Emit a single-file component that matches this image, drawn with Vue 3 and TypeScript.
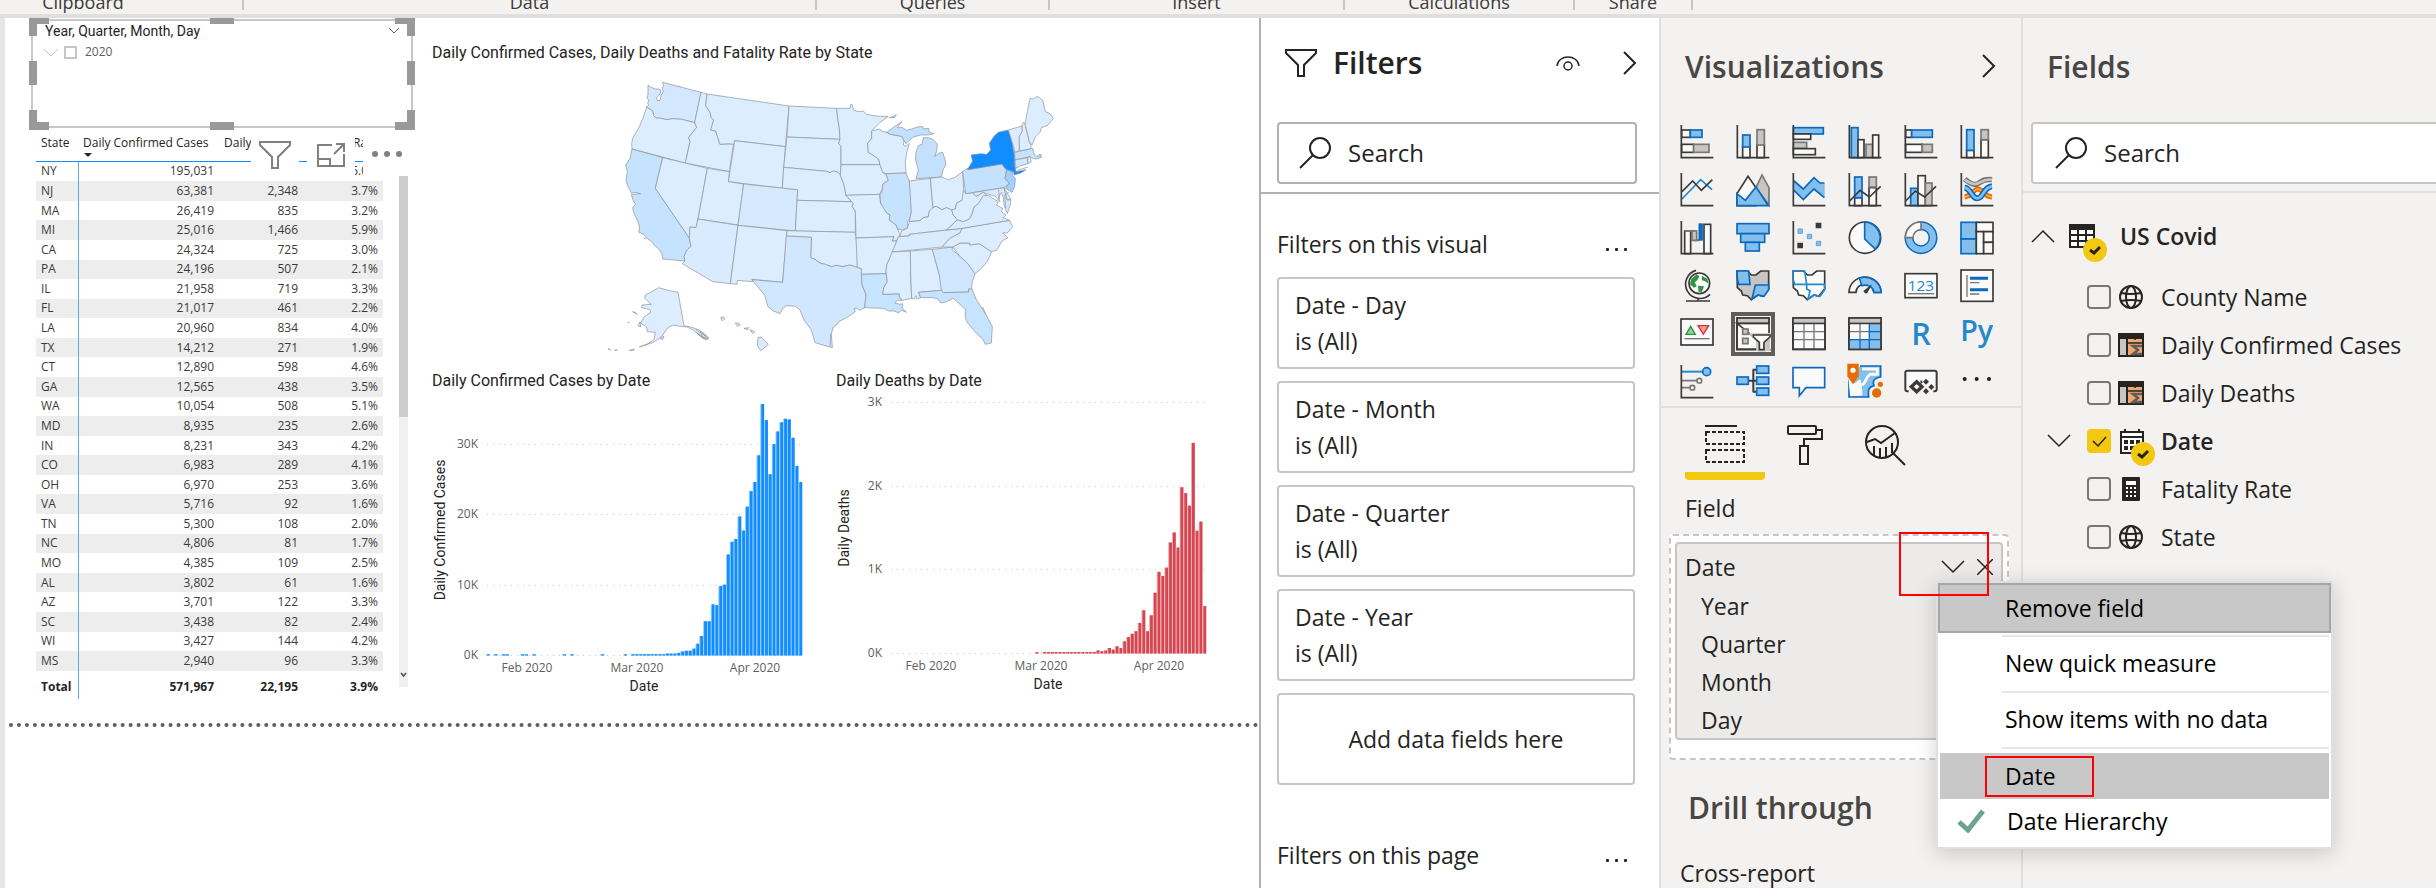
<script setup lang="ts">
import { ref } from 'vue'

type Row = [string, string, string, string]

const ribbonGroups = ['Clipboard', 'Data', 'Queries', 'Insert', 'Calculations', 'Share']

const rows: Row[] = [
  ['NY', '195,031', '9,805', '5.0%'],
  ['NJ', '63,381', '2,348', '3.7%'],
  ['MA', '26,419', '835', '3.2%'],
  ['MI', '25,016', '1,466', '5.9%'],
  ['CA', '24,324', '725', '3.0%'],
  ['PA', '24,196', '507', '2.1%'],
  ['IL', '21,958', '719', '3.3%'],
  ['FL', '21,017', '461', '2.2%'],
  ['LA', '20,960', '834', '4.0%'],
  ['TX', '14,212', '271', '1.9%'],
  ['CT', '12,890', '598', '4.6%'],
  ['GA', '12,565', '438', '3.5%'],
  ['WA', '10,054', '508', '5.1%'],
  ['MD', '8,935', '235', '2.6%'],
  ['IN', '8,231', '343', '4.2%'],
  ['CO', '6,983', '289', '4.1%'],
  ['OH', '6,970', '253', '3.6%'],
  ['VA', '5,716', '92', '1.6%'],
  ['TN', '5,300', '108', '2.0%'],
  ['NC', '4,806', '81', '1.7%'],
  ['MO', '4,385', '109', '2.5%'],
  ['AL', '3,802', '61', '1.6%'],
  ['AZ', '3,701', '122', '3.3%'],
  ['SC', '3,438', '82', '2.4%'],
  ['WI', '3,427', '144', '4.2%'],
  ['MS', '2,940', '96', '3.3%'],
]

/* State outlines: [name, fill, path] */
const P = '#dcedff'
const states: [string, string, string][] = [
  ['WA', '#d3e8ff', 'M144 30L152 36 165 42 176 42 183 46 180 58 170 68 172 77 180 76 184 60 190 50 186 38 191 34 188 22 303 52 284 143 245 133 220 131 200 134 184 130 168 129 161 122 158 108 140 96 146 90 143 84 147 75 141 70 144 58Z'],
  ['OR', P, 'M140 96L158 108 161 122 168 129 184 130 200 134 220 131 245 133 284 143 290 157 278 172 266 188 270 200 256 264 96 222 95 206 98 190 118 155 130 126Z'],
  ['CA', '#c5e2ff', 'M96 222L188 248 166 340 268 489 273 514 260 526 252 545 255 558 188 552 186 536 176 522 162 510 158 502 138 488 132 478 117 472 118 455 114 440 100 410 98 398 106 388 98 372 94 358 122 356 104 352 94 354 84 334 78 318 82 290 77 270 90 250Z'],
  ['NV', P, 'M188 248L322 280 294 432 288 458 270 456 268 489 166 340Z'],
  ['ID', P, 'M303 52L321 57 317 92 330 112 334 128 341 135 332 165 347 168 352 184 360 208 401 206 388 290 256 264 270 200 266 188 278 172 290 157 284 143Z'],
  ['MT', P, 'M321 57L567 93 556 215 404 197 401 208 384 206 360 208 352 184 347 168 332 165 341 135 334 128 330 112 317 92Z'],
  ['WY', P, 'M404 197L556 215 547 340 385 320Z'],
  ['UT', P, 'M322 280L388 290 385 320 431 327 414 450 294 432Z'],
  ['CO', '#d6eaff', 'M431 327L593 344 586 468 414 451Z'],
  ['AZ', '#d9ecff', 'M294 432L414 451 391 626 338 620 247 566 255 558 252 545 260 526 273 514 268 489 270 456 288 458Z'],
  ['NM', P, 'M414 451L561 467 548 622 456 613 458 620 412 616 411 628 391 626Z'],
  ['ND', P, 'M567 93L710 100 713 130 718 160 720 193 561 186Z'],
  ['SD', P, 'M561 186L720 193 716 205 723 214 723 268 721 300 714 292 700 288 690 293 680 289 551 277Z'],
  ['NE', P, 'M551 277L680 289 690 293 700 288 714 292 721 300 732 330 738 361 754 380 591 376 593 344 547 339Z'],
  ['KS', P, 'M591 376L754 380 760 386 756 394 766 408 766 472 586 468Z'],
  ['OK', P, 'M561 467L766 472 772 520 772 578 750 570 726 575 710 571 694 575 676 568 660 564 646 554 632 548 634 487 559 483Z'],
  ['TX', '#d0e7ff', 'M559 483L634 487 632 548 646 554 660 564 676 568 694 575 710 571 726 575 750 570 784 580 786 628 798 660 794 698 778 706 770 700 762 700 766 710 740 728 716 740 712 748 700 756 694 776 697 818 668 810 645 803 634 765 612 735 600 705 586 694 560 692 548 700 540 716 520 708 503 694 495 662 456 614 548 622Z'],
  ['MN', P, 'M710 100L750 100 752 88 757 90 760 105 776 110 790 108 800 118 822 122 838 124 865 124 840 142 815 168 815 190 803 205 805 232 826 244 836 252 840 269 723 269 723 214 716 205 720 193 718 160 713 130Z'],
  ['IA', P, 'M723 269L840 269 848 292 860 302 865 316 848 328 846 344 838 358 738 361 732 330 721 300Z'],
  ['MO', P, 'M738 361L838 358 842 385 856 402 860 414 870 420 868 435 888 450 893 462 900 480 888 498 876 498 882 485 768 489 766 408 756 394 760 386Z'],
  ['AR', P, 'M768 489L882 485 876 498 890 498 880 530 870 548 860 570 858 596 784 598 784 580 772 578Z'],
  ['LA', '#c6e3ff', 'M784 598L858 596 862 620 852 636 848 658 898 656 898 666 906 676 892 676 884 684 900 688 908 686 906 698 920 712 904 706 896 714 884 708 866 708 850 700 822 699 794 698 798 660 786 628Z'],
  ['WI', P, 'M815 168L840 162 844 168 860 172 872 178 905 184 912 198 910 210 918 214 928 205 920 232 916 262 918 294 858 296 848 292 840 269 836 252 805 232 803 205 815 190Z'],
  ['IL', '#c5e2ff', 'M858 296L918 294 928 318 932 360 934 410 930 430 922 442 922 460 908 465 893 462 888 450 868 435 870 420 860 414 842 385 840 360 848 344 848 328 865 316 860 302Z'],
  ['MI', '#c3e1ff', 'M860 172L882 156 905 140 892 158 908 158 920 166 935 162 952 156 968 154 970 162 986 160 988 172 1002 176 984 180 962 180 940 186 928 196 918 206 912 196 905 184 872 178ZM970 188L985 188 1000 194 1012 208 1010 228 1004 244 1018 234 1028 232 1034 250 1038 270 1030 282 1024 306 948 311 955 285 947 256 947 236 955 212 966 208ZM868 128L880 124 889 119 884 128Z'],
  ['IN', '#d8ebff', 'M928 318L991 310 999 400 988 408 985 425 970 428 960 437 928 440 934 410Z'],
  ['OH', P, 'M991 310L1024 306 1045 314 1064 308 1088 290 1092 360 1086 376 1070 384 1066 402 1055 405 1040 398 1026 404 1008 394 999 398Z'],
  ['KY', P, 'M928 440L960 437 970 428 985 425 988 408 999 398 1008 394 1026 404 1040 398 1055 405 1060 420 1072 434 1040 465 928 478 928 483 900 484 904 468 922 460Z'],
  ['TN', '#d9ecff', 'M895 485L928 483 928 478 1086 460 1080 474 1050 490 1026 516 876 531 888 504Z'],
  ['MS', P, 'M876 531L931 528 932 600 935 670 908 676 898 666 898 656 848 658 852 636 862 620 858 590 860 570 870 548Z'],
  ['AL', P, 'M931 528L997 523 1018 600 1024 620 1025 646 956 652 962 668 950 672 948 662 942 672 935 670 932 600Z'],
  ['GA', '#d0e7ff', 'M997 523L1058 516 1056 524 1078 542 1102 564 1125 596 1116 624 1115 644 1106 642 1106 651 1030 653 1024 646 1018 600Z'],
  ['FL', '#c6e3ff', 'M956 652L1025 646 1030 653 1106 651 1106 642 1116 642 1128 672 1154 712 1168 738 1177 755 1174 804 1156 808 1148 792 1130 776 1104 745 1096 730 1096 704 1084 692 1060 670 1040 680 1022 684 1014 672 1000 668 962 668Z'],
  ['SC', P, 'M1058 516L1080 504 1108 504 1110 510 1138 506 1175 530 1162 560 1140 584 1125 596 1102 564 1078 542Z'],
  ['NC', P, 'M1086 460L1228 436 1238 455 1222 474 1208 474 1224 488 1206 498 1190 526 1175 530 1138 506 1110 510 1108 504 1080 504 1058 516 1026 516 1050 490 1080 474Z'],
  ['VA', '#d9ecff', 'M1040 465L1072 434 1090 440 1108 432 1115 420 1122 396 1136 384 1150 358 1166 362 1195 380 1190 390 1208 400 1204 410 1218 420 1210 428 1228 436 1086 460Z'],
  ['WV', P, 'M1090 345L1097 356 1118 353 1128 364 1150 352 1160 362 1150 362 1136 384 1122 396 1115 420 1108 432 1090 440 1072 434 1060 420 1055 405 1066 402 1070 384 1086 376Z'],
  ['PA', '#c4e2ff', 'M1088 290L1102 280 1104 284 1205 267 1220 285 1215 310 1228 325 1212 338 1097 356Z'],
  ['NY', '#118dff', 'M1102 284L1118 258 1113 240 1142 236 1160 238 1172 225 1168 205 1182 184 1195 172 1225 165 1236 200 1243 240 1244 270 1248 290 1278 284 1262 294 1242 300 1242 291 1220 284 1205 267Z'],
  ['NJ', '#9fd0ff', 'M1220 284L1240 292 1238 302 1246 310 1244 334 1236 352 1216 340 1228 325 1215 310Z'],
  ['VT', P, 'M1225 165L1266 153 1267 168 1258 185 1258 228 1244 232 1243 222Z'],
  ['NH', P, 'M1266 153L1270 142 1275 146 1288 200 1294 216 1290 222 1258 228 1258 185 1267 168Z'],
  ['ME', P, 'M1275 146L1282 110 1290 70 1300 72 1312 64 1328 75 1336 110 1350 116 1360 130 1344 150 1324 158 1320 172 1306 186 1296 210 1288 200Z'],
  ['MA', '#c5e2ff', 'M1244 232L1290 222 1298 220 1302 236 1310 244 1324 240 1318 238 1326 246 1308 252 1298 250 1290 245 1245 255Z'],
  ['CT', '#d3e8ff', 'M1245 255L1283 248 1284 266 1262 272 1248 280Z'],
  ['RI', P, 'M1283 248L1290 245 1294 260 1284 266Z'],
  ['MD', '#d6eaff', 'M1118 353L1212 338 1222 375 1233 374 1230 392 1222 416 1212 390 1210 368 1204 352 1196 366 1200 380 1186 364 1166 358 1150 352 1128 364Z'],
  ['DE', P, 'M1212 340L1220 350 1232 372 1222 375Z'],
  ['AK', P, 'M176 638L205 646 234 652 252 752 272 756 296 764 320 782 326 792 306 788 284 768 262 756 240 754 222 750 206 756 196 768 186 784 160 802 118 816 140 808 162 794 166 772 142 770 140 756 122 744 132 726 152 712 150 704 124 698 126 690 154 688 134 670 136 660 152 652Z'],
  ['AK islands', P, 'M98 710L112 718 106 712ZM180 790L192 784 188 794ZM88 826L104 822 100 826ZM24 821L32 825ZM44 826L52 825ZM120 740L122 756 114 752ZM84 742L88 743Z'],
  ['HI', '#d8ebff', 'M362 728L370 725 374 732 366 737ZM406 744L416 744 420 750 412 754ZM432 760L446 758 442 764ZM450 764L464 770 458 776ZM474 788L484 786 505 808 482 827 472 812Z'],
]
const coastDetail =
  'M288 764L326 788M286 770L322 794M292 776L318 796M300 768L312 792M308 772L322 796M1148 696L1156 716M1226 352L1214 360 1218 400M1196 344L1198 372M1252 286L1284 276M692 776L690 814M130 488L138 492'

interface Chart {
  title: string
  axis: string
  color: string
  light: string
  base: number
  step: number
  ticks: string[]
  values: number[]
}

const fill = (n: number, v: number): number[] => Array(n).fill(v)
/* One value per day, 22 January to 13 April, in units of one axis step */
const cases: number[] = fill(83, 0)
;[0, 2, 4, 5, 9, 10, 12, 20, 22, 30, 36].forEach((i) => (cases[i] = 0.01))
;[
  ...fill(9, 0.012), ...fill(3, 0.02), 0.03, 0.05, 0.06, 0.06, 0.09, 0.16, 0.27, 0.48, 0.48, 0.72, 0.71, 0.98, 1.0,
  1.43, 1.61, 1.65, 1.97, 1.77, 2.11, 2.33, 2.46, 2.84, 3.57, 3.34, 2.57, 3.0, 3.18, 3.31, 3.36, 3.35, 3.09, 2.69, 2.46,
].forEach((v, i) => (cases[38 + i] = v))
const deaths: number[] = fill(83, 0)
deaths[38] = 0.01
;[
  ...fill(14, 0.012), 0.03, 0.02, 0.03, 0.06, 0.04, 0.08, 0.06, 0.14, 0.19, 0.23, 0.26, 0.36, 0.51, 0.26, 0.45, 0.72,
  0.97, 0.92, 1.02, 1.32, 1.44, 1.26, 1.98, 1.91, 1.76, 2.51, 1.46, 1.57, 0.56,
].forEach((v, i) => (deaths[40 + i] = v))

const charts: Chart[] = [
  { title: 'Daily Confirmed Cases by Date', axis: 'Daily Confirmed Cases', color: '#118dff', light: '#8ccaff', base: 264, step: 70.3, ticks: ['0K', '10K', '20K', '30K'], values: cases },
  { title: 'Daily Deaths by Date', axis: 'Daily Deaths', color: '#d64550', light: '#efb0b5', base: 262, step: 83.7, ticks: ['0K', '1K', '2K', '3K'], values: deaths },
]
const months: [string, number][] = [['Feb 2020', 95], ['Mar 2020', 205], ['Apr 2020', 323]]
const pitch = 3.81

/* Visual gallery icons, drawn on a 102 unit square */
const D = '#3b3a39'
const B = '#83beec'
const BS = '#0a6abf'
const kinds: Record<string, [string, string]> = {
  w: ['#fafafa', D],
  b: [B, BS],
  g: ['#c8c6c4', '#797775'],
}
const R = (x: number, y: number, w: number, h: number, k: string) =>
  `<rect x="${x}" y="${y}" width="${w}" height="${h}" fill="${kinds[k][0]}" stroke="${kinds[k][1]}" stroke-width="5"/>`
const L = (d: string, c = D, f = 'none', w = 5) => `<path d="${d}" stroke="${c}" fill="${f}" stroke-width="${w}"/>`
const AX = L('M4 0V98H100')

const gallery: [string, string][] = [
  ['Stacked bar chart', R(5, 15, 26, 22, 'w') + R(31, 15, 35, 22, 'b') + R(5, 58, 36, 24, 'w') + R(41, 58, 46, 24, 'g') + AX],
  ['Stacked column chart', R(20, 64, 22, 34, 'w') + R(20, 30, 22, 36, 'b') + R(63, 58, 22, 40, 'w') + R(63, 14, 22, 46, 'g') + AX],
  ['Clustered bar chart', R(4, 8, 90, 19, 'b') + R(4, 27, 52, 16, 'w') + R(4, 52, 40, 18, 'g') + R(4, 71, 66, 18, 'w') + AX],
  ['Clustered column chart', R(10, 8, 20, 90, 'b') + R(30, 44, 18, 54, 'w') + R(54, 58, 20, 40, 'g') + R(74, 30, 18, 68, 'w') + AX],
  ['100% stacked bar chart', R(5, 15, 18, 22, 'w') + R(23, 15, 62, 22, 'b') + R(5, 58, 50, 24, 'w') + R(55, 58, 30, 24, 'g') + AX],
  ['100% stacked column chart', R(20, 76, 22, 22, 'w') + R(20, 14, 22, 62, 'b') + R(63, 44, 22, 54, 'w') + R(63, 14, 22, 30, 'g') + AX],
  ['Line chart', L('M6 78L62 20 96 50', '#2488c9') + L('M6 56L38 24 64 52 97 20') + AX],
  ['Area chart', L('M3 62L36 10 60 44V98H3Z', D, '#fafafa') + L('M60 44L78 6 99 44V96Z', '#797775', '#c8c6c4') + L('M3 98V62L28 82 60 42 97 98Z', BS, B)],
  ['Stacked area chart', L('M6 24L34 48 66 14 84 30H97V74L66 48 34 80 6 52Z', B, B, 2) + L('M6 24L34 48 66 14 84 30H97', BS) + L('M6 52L34 80 66 48 97 74', BS) + AX],
  ['Line and stacked column chart', R(20, 74, 22, 24, 'w') + R(20, 12, 22, 62, 'b') + R(63, 44, 22, 54, 'w') + R(63, 12, 22, 30, 'g') + L('M5 84L36 52 64 72 98 40') + AX],
  ['Line and clustered column chart', R(20, 46, 22, 52, 'b') + R(42, 8, 22, 90, 'w') + R(64, 30, 20, 68, 'g') + L('M5 84L34 54 62 72 96 40') + AX],
  ['Ribbon chart', L('M14 18C40 40 50 36 60 28S80 18 96 20', '#797775', 'none', 16) + L('M14 20C40 38 50 34 60 28S80 18 96 20', '#c8c6c4', 'none', 8) + L('M14 72C38 68 40 48 54 48S70 70 96 72', '#e66c00', 'none', 15) + L('M14 72C38 68 40 48 54 48S70 70 96 72', '#ffb347', 'none', 5) + L('M14 44C34 46 34 76 52 76S70 42 96 40', BS, 'none', 18) + L('M14 44C34 46 34 76 52 76S70 42 96 40', B, 'none', 8) + AX],
  ['Waterfall chart', R(14, 30, 18, 68, 'w') + L('M14 30H44V58H58', '#797775', 'none', 6) + R(36, 30, 14, 28, 'g') + R(58, 10, 8, 46, 'b') + L('M62 8V58', BS, 'none', 10) + R(72, 10, 20, 88, 'w') + AX],
  ['Funnel chart', R(3, 8, 96, 30, 'b') + R(14, 38, 72, 26, 'b') + R(28, 64, 42, 26, 'b')],
  ['Scatter chart', '<g fill="#3b3a39"><path d="M71 5h17v17H71zM16 65h17v17H16z"/></g><g fill="#83beec" stroke="#6fa0c8" stroke-width="3"><path d="M18 24h13v13H18zM46 40h13v13H46zM73 61h13v13H73z"/></g>' + AX],
  ['Pie chart', '<circle cx="51" cy="50" r="47" fill="#fafafa" stroke="#3b3a39" stroke-width="5"/>' + L('M50 3A47 47 0 0 1 82 84L50 54Z', BS, B)],
  ['Donut chart', '<circle cx="51" cy="50" r="36" fill="none" stroke="#0a6abf" stroke-width="27"/><circle cx="51" cy="50" r="36" fill="none" stroke="#83beec" stroke-width="18"/>' + L('M4 50A47 47 0 0 1 51 3V26A24 24 0 0 0 27 50Z', '#797775', '#fafafa')],
  ['Treemap', R(3, 4, 46, 50, 'b') + R(3, 54, 46, 44, 'b') + R(49, 4, 50, 28, 'w') + R(49, 32, 22, 66, 'w') + R(71, 32, 28, 32, 'w') + R(71, 64, 28, 34, 'w')],
  ['Map', '<circle cx="58" cy="43" r="31" fill="#fafafa" stroke="#3b3a39" stroke-width="5"/><path d="M34 30L50 16 58 22 52 34 44 40 50 52 42 56 30 46ZM66 20L82 30 86 44 74 36 66 34ZM54 50L72 52 66 68 56 70Z" fill="#2f9444"/>' + L('M48 4A43 43 0 1 0 90 76M54 86V96M18 96H90', D)],
  ['Filled map', L('M3 6H34L46 18H60L74 6H98V60L80 82 66 78 46 92 34 80 20 78 16 66 4 56Z', D, '#c8c6c4') + L('M3 6H38L42 46H8L4 30Z', BS, B) + L('M58 48H98V62L84 82 66 78 48 90Z', BS, B)],
  ['Shape map', L('M3 6H34L46 18H60L74 6H98V60L80 82 66 78 46 92 34 80 20 78 16 66 4 56Z', D, '#fafafa') + L('M8 46L3 30V6H38L44 46ZM44 46H98V62L84 82 66 78 48 90 54 66 44 60Z', '#2488c9')],
  ['Gauge', L('M3 70A48 46 0 0 1 99 70H78A27 25 0 0 0 24 70Z', D, '#fafafa') + L('M34 28A48 46 0 0 1 99 70H78A27 25 0 0 0 42 50Z', BS, B) + '<path d="M46 66L72 46 58 72Q50 76 46 66Z" fill="#3b3a39"/>'],
  ['Card', R(3, 14, 96, 72, 'w') + '<text x="51" y="66" font-size="46" text-anchor="middle" fill="#2488c9" font-family="Open Sans, sans-serif">123</text>' + L('M12 74H90', '#797775', 'none', 4)],
  ['Multi-row card', R(3, 3, 96, 94, 'w') + L('M30 28H84M30 62H84', BS, 'none', 9) + L('M30 41H58M30 75H58M21 18V84', '#797775', 'none', 4)],
  ['KPI', R(3, 6, 96, 78, 'w') + L('M18 52L32 28 46 52Z', '#2f9444', '#8fd0a0', 4) + L('M54 26H86L70 52Z', '#d13438', '#ff9a9a', 4) + L('M13 65H89', '#797775', 'none', 4)],
  ['Slicer', R(3, 3, 96, 94, 'w') + R(3, 3, 96, 16, 'g') + L('M3 19H99V3H3V97H99Z') + R(20, 36, 16, 16, 'g') + R(20, 64, 16, 16, 'g') + '<path d="M60 60H102V102H60Z" fill="#c8c6c4"/>' + L('M52 54H102L84 74V98H70V74Z', '#d2d0ce', '#fafafa', 12) + L('M52 54H102V60L84 76V98H70V76L52 60Z', D, '#fafafa')],
  ['Table', R(3, 3, 96, 94, 'w') + L('M3 10H99', '#c8c6c4', 'none', 12) + L('M5 44H97M5 68H97M36 20V96M66 20V96', '#797775', 'none', 4) + L('M3 19H99V3H3V97H99V19')],
  ['Matrix', R(3, 3, 96, 94, 'w') + L('M3 10H99', '#c8c6c4', 'none', 12) + '<path d="M64 20H98V96H4V68H64Z" fill="#83beec"/>' + L('M5 44H64M36 20V68', '#797775', 'none', 4) + L('M64 20V96M64 44H98M5 68H98M36 68V96', BS, 'none', 4) + L('M3 19H99V3H3V97H99V19')],
  ['R script visual', '<text x="51" y="84" font-size="92" font-weight="600" text-anchor="middle" fill="#2488c9" font-family="Open Sans, sans-serif">R</text>'],
  ['Python visual', '<text x="50" y="72" font-size="86" font-weight="600" text-anchor="middle" fill="#2488c9" font-family="Open Sans, sans-serif">Py</text>'],
  ['Key influencers', L('M6 20H70', '#2488c9', 'none', 6) + L('M6 47H52M6 68H32', '#797775') + '<circle cx="80" cy="20" r="12" fill="#83beec" stroke="#0a6abf" stroke-width="5"/><circle cx="58" cy="47" r="7" fill="#fafafa" stroke="#797775" stroke-width="5"/><circle cx="37" cy="68" r="7" fill="#fafafa" stroke="#797775" stroke-width="5"/>' + AX],
  ['Decomposition tree', L('M34 47H62M52 14V80M50 14H62M50 80H62', D, 'none', 6) + R(3, 36, 34, 22, 'b') + R(62, 3, 36, 22, 'b') + R(62, 36, 36, 22, 'b') + R(62, 69, 36, 22, 'b')],
  ['Q&A', L('M3 8H98V68H42L22 92V68H3Z', BS, '#fafafa')],
  ['ArcGIS map', L('M36 3H98V36C74 40 74 50 78 62 60 66 60 78 62 96H3V44', BS, B) + L('M3 44L20 56 36 44 40 60 42 90 8 92Z', '#fafafa', '#fafafa', 3) + L('M42 12H88V28H66C50 40 58 50 42 60', '#fafafa', 'none', 9) + '<path d="M-2 -4H32V34L15 58 -2 34Z" fill="#e66c00"/><circle cx="15" cy="16" r="8" fill="#fafafa"/><circle cx="88" cy="84" r="16" fill="#f3f2f1"/><circle cx="86" cy="84" r="14" fill="#e66c00"/><circle cx="97" cy="58" r="8" fill="#e66c00"/>'],
  ['Power Apps', '<rect x="4" y="17" width="94" height="62" rx="6" fill="#fafafa" stroke="#3b3a39" stroke-width="6"/><path d="M14 68H88V88H14Z" fill="#f3f2f1"/>' + L('M38 50L54 65 38 80 22 65Z', D, '#fafafa', 10) + '<path d="M66 41l9 9-9 9-9-9zM82 57l9 9-9 9-9-9zM66 70l9 9-9 9-9-9zM50 44l7 8-8 6z" fill="#3b3a39"/>'],
  ['Get more visuals', '<circle cx="14" cy="42" r="6" fill="#201f1e"/><circle cx="50" cy="42" r="6" fill="#201f1e"/><circle cx="87" cy="42" r="6" fill="#201f1e"/>'],
]

const filterCards = ['Date - Day', 'Date - Month', 'Date - Quarter', 'Date - Year']
const dateParts = ['Year', 'Quarter', 'Month', 'Day']

const globe = '<g fill="none" stroke="#252423" stroke-width="2"><circle cx="13" cy="12" r="11"/><ellipse cx="13" cy="12" rx="5" ry="11"/><path d="M3 8Q13 10 23 8M3 16Q13 14 23 16"/></g>'
const sigma = '<path d="M0 0H26V24H0Z" fill="#252423"/><path d="M2 6H8V22H2Z" fill="#c8c6c4"/><path d="M10 6H24V22H10Z" fill="#f0a66c"/><path d="M10 10H24M17 4V7" stroke="#252423" stroke-width="1.5"/><path d="M24 13H15L20 17 15 21H24" fill="none" stroke="#605e5c" stroke-width="2.5"/>'
const calendar = '<path d="M3 3H25V24H3Z" fill="#fff" stroke="#252423" stroke-width="2"/><path d="M3 8H25M7 0V4M21 0V4" stroke="#252423" stroke-width="2"/><path d="M6 11h4v4H6zM12 11h4v4h-4zM18 11h4v4h-4zM6 17h4v4H6zM12 17h4v4h-4z" fill="#252423"/>'
const calculator = '<rect x="4" y="0" width="18" height="24" rx="1" fill="#252423"/><path d="M8 4H18V8H8Z" fill="#fff"/><path d="M8 10h2v2H8zM12 10h2v2h-2zM16 10h2v2h-2zM8 14h2v2H8zM12 14h2v2h-2zM16 14h2v2h-2zM8 18h2v2H8zM12 18h2v2h-2zM16 18h2v2h-2z" fill="#fff"/>'

const fields = ref([
  { name: 'County Name', icon: globe, on: false },
  { name: 'Daily Confirmed Cases', icon: sigma, on: false },
  { name: 'Daily Deaths', icon: sigma, on: false },
  { name: 'Date', icon: calendar, on: true },
  { name: 'Fatality Rate', icon: calculator, on: false },
  { name: 'State', icon: globe, on: false },
])
</script>

<template>
  <div class="app">
    <header class="ribbon">
      <span v-for="g in ribbonGroups" :key="g" class="ribbon-group">{{ g }}</span>
    </header>

    <div class="workspace">
      <main class="report">
        <div class="page">
          <div class="left-col">
            <section class="slicer">
              <i v-for="n in 8" :key="n" :class="['handle', 'h' + n]"></i>
              <div class="slicer-head">
                <h2>Year, Quarter, Month, Day</h2>
                <button class="plain" aria-label="Expand slicer">
                  <svg width="12" height="8" viewBox="0 0 12 8"><path d="M1 1L6 6 11 1" fill="none" stroke="#605e5c" /></svg>
                </button>
              </div>
              <label class="slicer-item">
                <svg width="14" height="9" viewBox="0 0 14 9"><path d="M0 1L7 8 14 1" fill="none" stroke="#c8c6c4" /></svg>
                <input type="checkbox" />
                <span>2020</span>
              </label>
            </section>

            <section class="matrix">
              <table>
                <thead>
                  <tr>
                    <th>State</th>
                    <th class="sorted">Daily Confirmed Cases</th>
                    <th>Daily Deaths</th>
                    <th>Fatality Rate</th>
                  </tr>
                </thead>
                <tbody>
                  <tr v-for="r in rows" :key="r[0]">
                    <td v-for="(c, i) in r" :key="i">{{ c }}</td>
                  </tr>
                </tbody>
                <tfoot>
                  <tr><td>Total</td><td>571,967</td><td>22,195</td><td>3.9%</td></tr>
                </tfoot>
              </table>
              <div class="visual-tools">
                <button class="plain" aria-label="Filters on visual">
                  <svg width="48" height="46" viewBox="0 0 48 46"><path d="M9 10H39V13L27 25V36H21V25L9 13Z" fill="none" stroke="#808080" stroke-width="2" /></svg>
                </button>
                <button class="plain" aria-label="Focus mode">
                  <svg width="48" height="46" viewBox="0 0 48 46"><path d="M25 13H11V34H37V22M11 27H23V34M29 12H37V20M37 12L27 22" fill="none" stroke="#808080" stroke-width="2" /></svg>
                </button>
                <button class="plain" aria-label="More options">
                  <svg width="48" height="46" viewBox="0 0 48 46" fill="#808080"><circle cx="12" cy="22" r="3" /><circle cx="24" cy="22" r="3" /><circle cx="36" cy="22" r="3" /></svg>
                </button>
              </div>
              <div class="scroll">
                <div class="thumb"></div>
                <svg width="9" height="8" viewBox="0 0 9 8"><path d="M2 2L4.500 5 7 2" fill="none" stroke="#505050" stroke-width="1.500" /></svg>
              </div>
            </section>
          </div>

          <div class="right-col">
            <figure>
              <figcaption>Daily Confirmed Cases, Daily Deaths and Fatality Rate by State</figcaption>
              <svg class="map" width="470" height="285" viewBox="0 0 1410 855" stroke="#8a8f94" stroke-width="2" stroke-linejoin="round">
                <path v-for="s in states" :key="s[0]" :d="s[2]" :fill="s[1]" />
                <path :d="coastDetail" fill="none" />
              </svg>
            </figure>
            <div class="charts">
              <figure v-for="c in charts" :key="c.title">
                <figcaption>{{ c.title }}</figcaption>
                <svg width="380" height="310" viewBox="0 0 380 310">
                  <g v-for="(t, i) in c.ticks" :key="t">
                    <path :d="`M55 ${Math.round(c.base - i * c.step)}.5H371`" stroke="#c8c6c4" stroke-dasharray="1 5" />
                    <text class="tick" x="46" :y="c.base - i * c.step + 4" text-anchor="end">{{ t }}</text>
                  </g>
                  <g v-for="(v, i) in c.values" :key="i">
                    <template v-if="v">
                      <rect :x="54 + i * pitch" :y="c.base - v * c.step" width="3.800" :height="v * c.step + 0.500" :fill="c.light" />
                      <rect :x="55 + i * pitch" :y="c.base - v * c.step" width="2.800" :height="v * c.step + 0.500" :fill="c.color" />
                    </template>
                  </g>
                  <text v-for="m in months" :key="m[0]" class="tick" :x="m[1]" :y="c.base + 17" text-anchor="middle">{{ m[0] }}</text>
                  <text class="axis" x="212" :y="c.base + 36" text-anchor="middle">Date</text>
                  <text class="axis" :transform="`translate(13 ${c.base - 125}) rotate(-90)`" text-anchor="middle">{{ c.axis }}</text>
                </svg>
              </figure>
            </div>
          </div>
        </div>
        <div class="page-end"></div>
      </main>

      <aside class="filters">
        <div class="filters-head">
          <svg width="34" height="32" viewBox="0 0 34 32"><path d="M2 3H32V6L20 18V29H14V18L2 6Z" fill="none" stroke="#252423" stroke-width="2" /></svg>
          <h1>Filters</h1>
          <button class="plain eye" aria-label="Show filter pane">
            <svg width="26" height="18" viewBox="0 0 26 18" fill="none" stroke="#252423" stroke-width="2"><path d="M2 12C3 0 23 0 24 12" stroke-width="1.500" /><circle cx="13" cy="12" r="4" stroke-width="1.500" /></svg>
          </button>
          <button class="plain" aria-label="Collapse filters">
            <svg width="14" height="24" viewBox="0 0 14 24"><path d="M1 1L12 12 1 23" fill="none" stroke="#252423" stroke-width="2" /></svg>
          </button>
        </div>
        <label class="search">
          <svg width="32" height="32" viewBox="0 0 32 32" fill="none" stroke="#252423" stroke-width="2"><circle cx="21" cy="11" r="10" /><path d="M14 18L1 31" /></svg>
          <input type="search" placeholder="Search" aria-label="Search filters" />
        </label>
        <div class="filter-list">
          <div class="section-title"><span>Filters on this visual</span><button class="plain dots" aria-label="More"><i></i><i></i><i></i></button></div>
          <div v-for="f in filterCards" :key="f" class="card"><span>{{ f }}</span><span>is (All)</span></div>
          <div class="card drop">Add data fields here</div>
          <div class="section-title second"><span>Filters on this page</span><button class="plain dots" aria-label="More"><i></i><i></i><i></i></button></div>
        </div>
      </aside>

      <aside class="viz">
        <div class="pane-head">
          <h1>Visualizations</h1>
          <button class="plain" aria-label="Collapse visualizations">
            <svg width="14" height="24" viewBox="0 0 14 24"><path d="M1 1L12 12 1 23" fill="none" stroke="#252423" stroke-width="2" /></svg>
          </button>
        </div>
        <div class="gallery">
          <button v-for="g in gallery" :key="g[0]" :class="['plain', { picked: g[0] === 'Slicer' }]" :aria-label="g[0]">
            <svg width="34" height="34" viewBox="0 0 102 102" overflow="visible" v-html="g[1]"></svg>
          </button>
        </div>
        <div class="tabs">
          <button class="plain active" aria-label="Fields">
            <svg width="42" height="42" viewBox="0 0 42 42" fill="none" stroke="#252423" stroke-width="2"><path d="M1 2H33" /><path d="M2 8H40V20H2ZM2 26H40V38H2Z" stroke-dasharray="4 2" /></svg>
          </button>
          <button class="plain" aria-label="Format">
            <svg width="42" height="42" viewBox="0 0 42 42" fill="none" stroke="#252423" stroke-width="2"><rect x="4" y="2" width="28" height="8" rx="1" /><path d="M32 6H38V15H20V22" /><rect x="16" y="22" width="8" height="18" /></svg>
          </button>
          <button class="plain" aria-label="Analytics">
            <svg width="42" height="42" viewBox="0 0 42 42" fill="none" stroke="#252423" stroke-width="2"><circle cx="18" cy="18" r="16" /><path d="M29 29L41 41M3 18L11 15 17 19 31 9M10 22V31M16 24V33M22 23V33M28 19V29" /></svg>
          </button>
        </div>
        <div class="well-title">Field</div>
        <div class="well">
          <div class="well-item">
            <div class="well-row">
              <span>Date</span>
              <button class="plain" aria-label="Field options">
                <svg width="24" height="14" viewBox="0 0 24 14"><path d="M1 1L12 12 23 1" fill="none" stroke="#252423" stroke-width="1.500" /></svg>
              </button>
              <button class="plain" aria-label="Remove">
                <svg width="16" height="16" viewBox="0 0 16 16"><path d="M0 0L16 16M16 0L0 16" fill="none" stroke="#252423" stroke-width="1.500" /></svg>
              </button>
            </div>
            <div v-for="d in dateParts" :key="d" class="well-sub">{{ d }}</div>
          </div>
          <div class="menu" role="menu">
            <button role="menuitem" class="item first">Remove field</button>
            <hr />
            <button role="menuitem" class="item">New quick measure</button>
            <hr />
            <button role="menuitem" class="item">Show items with no data</button>
            <hr />
            <button role="menuitem" class="item hover"><mark>Date</mark></button>
            <button role="menuitem" class="item checked">
              <svg width="28" height="24" viewBox="0 0 28 24"><path d="M2 13L11 21 26 2" fill="none" stroke="#6ba292" stroke-width="5" /></svg>
              Date Hierarchy
            </button>
          </div>
          <div class="callout"></div>
        </div>
        <h1 class="drill">Drill through</h1>
        <div class="cross">Cross-report</div>
      </aside>

      <aside class="fields">
        <div class="pane-head"><h1>Fields</h1></div>
        <label class="search">
          <svg width="32" height="32" viewBox="0 0 32 32" fill="none" stroke="#252423" stroke-width="2"><circle cx="21" cy="11" r="10" /><path d="M14 18L1 31" /></svg>
          <input type="search" placeholder="Search" aria-label="Search fields" />
        </label>
        <div class="field-list">
          <div class="table-row">
            <svg width="24" height="14" viewBox="0 0 24 14"><path d="M1 13L12 2 23 13" fill="none" stroke="#252423" stroke-width="1.500" /></svg>
            <span class="icon">
              <svg width="26" height="24" viewBox="0 0 26 24"><path d="M0 0H26V24H0Z" fill="#252423" /><path d="M2 6h6v4H2zM10 6h6v4h-6zM18 6h6v4h-6zM2 12h6v4H2zM10 12h6v4h-6zM18 12h6v4h-6zM2 18h6v4H2zM10 18h6v4h-6zM18 18h6v4h-6z" fill="#fff" /></svg>
              <svg class="badge" width="24" height="24" viewBox="0 0 24 24"><circle cx="12" cy="12" r="12" fill="#f2c811" /><path d="M7 12L11 15 17 9" fill="none" stroke="#252423" stroke-width="3" /></svg>
            </span>
            <b>US Covid</b>
          </div>
          <label v-for="f in fields" :key="f.name" :class="['field-row', { on: f.on }]">
            <span class="twist"><svg v-if="f.on" width="24" height="14" viewBox="0 0 24 14"><path d="M1 1L12 12 23 1" fill="none" stroke="#252423" stroke-width="1.500" /></svg></span>
            <span class="check">
              <input v-model="f.on" type="checkbox" />
              <svg v-if="f.on" width="24" height="24" viewBox="0 0 24 24"><path d="M6 12L11 17 19 8" fill="none" stroke="#252423" stroke-width="1.500" /></svg>
            </span>
            <span class="icon">
              <svg width="26" height="26" viewBox="0 0 26 24" v-html="f.icon"></svg>
              <svg v-if="f.on" class="badge" width="24" height="24" viewBox="0 0 24 24"><circle cx="12" cy="12" r="12" fill="#f2c811" /><path d="M7 12L11 15 17 9" fill="none" stroke="#252423" stroke-width="3" /></svg>
            </span>
            <span>{{ f.name }}</span>
          </label>
        </div>
      </aside>
    </div>
  </div>
</template>

<style>
body { background: #f3f2f1; }
</style>

<style scoped>
.app, .app * { box-sizing: border-box; }
.app {
  height: 100vh;
  min-width: 2100px;
  overflow: hidden;
  display: flex;
  flex-direction: column;
  background: #f3f2f1;
  color: #252423;
  font: 23px/36px "Open Sans", "Noto Sans", sans-serif;
}
svg { display: block; flex: none; }
h1, h2, figure { margin: 0; font-weight: inherit; }
h1 { font-size: 30px; font-weight: 600; line-height: 40px; color: #484644; }
.plain { background: none; border: 0; padding: 0; display: block; flex: none; }

.ribbon {
  height: 18px;
  flex: none;
  border-bottom: 4px solid #e1dfdd;
  display: grid;
  grid-template-columns: 244px 573px 233px 295px 230px 118px;
  align-items: start;
  font-size: 18px;
  line-height: 4px;
  text-align: center;
  color: #3b3a39;
}
.ribbon-group { height: 10px; border-right: 2px solid #c8c6c4; }
.ribbon-group:first-child { padding-right: 76px; }

.workspace {
  flex: 1;
  min-height: 0;
  display: grid;
  grid-template-columns: minmax(0, 1fr) 402px 362px 413px;
}

.report { background: #fff; border-left: 5px solid #e7e6e4; overflow: hidden; }
.page { display: grid; grid-template-columns: 386px 1fr; column-gap: 17px; padding-left: 24px; min-height: 705px; }
.page-end { border-top: 4px dotted #605e5c; margin-left: 4px; }

.slicer { position: relative; height: 112px; }
.slicer::before { content: ""; position: absolute; inset: 1px 2px 2px 2px; border: 2px solid #c8c8c8; }
.handle { position: absolute; background: #999; }
.h1, .h2, .h3, .h4 { width: 20px; height: 18px; }
.h1 { left: 0; top: 0; clip-path: polygon(0 0, 100% 0, 100% 33%, 40% 33%, 40% 100%, 0 100%); }
.h2 { right: 0; top: 0; clip-path: polygon(0 0, 100% 0, 100% 100%, 60% 100%, 60% 33%, 0 33%); }
.h3 { left: 0; bottom: 0; height: 20px; clip-path: polygon(0 0, 40% 0, 40% 60%, 100% 60%, 100% 100%, 0 100%); }
.h4 { right: 0; bottom: 0; height: 20px; clip-path: polygon(60% 0, 100% 0, 100% 100%, 0 100%, 0 60%, 60% 60%); }
.h5, .h6 { left: 181px; width: 24px; height: 6px; }
.h5 { top: 0; }
.h6 { bottom: 0; height: 8px; }
.h7, .h8 { top: 43px; width: 8px; height: 24px; }
.h7 { left: 0; }
.h8 { right: 0; }
.slicer-head { position: relative; display: flex; justify-content: space-between; align-items: center; padding: 4px 15px 0 16px; }
.slicer-head h2 { font: 400 14px/18px Roboto, sans-serif; }
.slicer-item { position: relative; display: flex; align-items: center; padding: 3px 0 0 15px; font-size: 12px; line-height: 18px; color: #605e5c; }
.slicer-item input { appearance: none; width: 13px; height: 13px; margin: 0 8px 0 6px; border: 2px solid #c8c6c4; }

.matrix { position: relative; margin: 3px 0 0 7px; }
.matrix table { width: 346px; height: 566px; table-layout: fixed; border-collapse: collapse; font-size: 12px; line-height: 16px; color: #3b3a39; }
.matrix th, .matrix td { padding: 0 5px; text-align: right; white-space: nowrap; }
.matrix th { font-weight: 400; font-size: 12px; text-align: left; vertical-align: top; width: 84px; padding-top: 2px; border-bottom: 1px solid #118dff; color: #252423; }
.matrix thead tr { height: 28px; }
.matrix tfoot tr { height: 28px; font-weight: 700; color: #252423; }
.matrix tfoot td { padding-top: 3px; }
.matrix th:nth-child(1) { width: 42px; }
.matrix th:nth-child(2) { width: 141px; }
.matrix th:nth-child(4) { width: 80px; text-align: right; }
.matrix td:nth-child(1) { text-align: left; border-right: 1px solid #5ea8ea; }
.matrix tbody tr:nth-child(even) { background: #ededed; }
.sorted { position: relative; }
.sorted::after { content: ""; position: absolute; left: 6px; top: 20px; border: 4px solid transparent; border-top-color: #252423; border-bottom: 0; }
.visual-tools { position: absolute; left: 215px; top: -1px; display: flex; gap: 8px; }
.visual-tools .plain { background: #fff; }
.scroll { position: absolute; left: 363px; top: 43px; width: 9px; height: 511px; background: #f0f0f0; display: flex; flex-direction: column; justify-content: space-between; padding-bottom: 8px; }
.thumb { height: 241px; background: #ccc; }

.right-col { padding-top: 25px; }
figcaption { font: 16px/20px Roboto, sans-serif; }
.map { margin: 12px 0 11px 168px; }
.charts { display: grid; grid-template-columns: 404px 1fr; }
.tick { font-size: 12px; fill: #605e5c; }
.axis { font: 14px Roboto, sans-serif; fill: #252423; }

.filters { background: #fff; border-left: 2px solid #b3b0ad; border-right: 2px solid #e1dfdd; overflow: hidden; }
.filters-head { display: flex; align-items: center; padding: 23px 22px 0 23px; height: 67px; }
.filters-head h1 { margin-left: 15px; color: #252423; }
.eye { margin: 0 42px 0 auto; }
.search { display: flex; align-items: center; height: 62px; background: #fff; border: 2px solid #b3b0ad; border-radius: 4px; padding-left: 20px; }
.search input { flex: 1; min-width: 0; border: 0; outline: 0; background: none; font: inherit; font-size: 24px; margin-left: 17px; padding: 0; color: #252423; }
.search input::placeholder { color: #252423; opacity: 1; }
.filters .search { margin: 37px 22px 8px 16px; }
.filter-list { border-top: 2px solid #b3b0ad; padding: 32px 24px 0 16px; }
.section-title { display: flex; justify-content: space-between; align-items: center; padding-right: 8px; margin-bottom: 15px; }
.section-title.second { margin-top: 52px; }
.dots { display: flex; gap: 6px; padding-top: 10px; }
.dots i { width: 3px; height: 3px; background: #252423; border-radius: 1px; }
.card { height: 92px; border: 2px solid #c8c6c4; border-radius: 4px; padding: 8px 16px; display: flex; flex-direction: column; margin-bottom: 12px; }
.drop { align-items: center; justify-content: center; }

.viz { border-right: 2px solid #e1dfdd; }
.pane-head { display: flex; justify-content: space-between; align-items: center; padding: 29px 25px 0 24px; height: 69px; }
.viz .pane-head svg { margin-top: -3px; }
.gallery { display: grid; grid-template-columns: repeat(6, 56px); grid-auto-rows: 48px; padding: 31px 0 0 8px; height: 321px; border-bottom: 2px solid #e1dfdd; }
.gallery .plain { display: grid; place-items: center; }
.picked svg { background: #d2d0ce; outline: 4px solid #605e5c; outline-offset: 1px; }
.tabs { display: flex; padding: 16px 0 0 24px; height: 74px; }
.tabs .plain { width: 80px; height: 56px; display: flex; justify-content: center; }
.tabs .active { border-bottom: 8px solid #f2c811; border-radius: 4px; }
.well-title { padding: 8px 0 8px 24px; }
.well { position: relative; margin: 0 12px 0 8px; height: 226px; background: #fff; border: 2px dashed #c8c6c4; border-radius: 4px; padding: 6px 4px; }
.well-item { height: 198px; background: #edebe9; border: 2px solid #c8c6c4; border-radius: 4px; padding: 3px 8px; }
.well-row { display: flex; align-items: center; line-height: 40px; }
.well-row span { flex: 1; }
.well-row .plain + .plain { margin-left: 12px; }
.well-sub { padding-left: 16px; line-height: 38px; }
.menu { position: absolute; left: 265px; top: 45px; width: 397px; background: #fff; border: 2px solid #e1dfdd; box-shadow: 0 4px 20px rgba(0, 0, 0, 0.18); z-index: 2; }
.menu hr { margin: 2px 2px 0 64px; border: 0; border-top: 2px solid #e8e6e4; }
.item { display: flex; align-items: center; width: 100%; height: 52px; border: 0; background: #fff; font: inherit; color: #000; padding: 0 0 0 67px; }
.item.first { height: 50px; background: #c8c8c8; border: 2px solid #a6a6a6; padding-left: 65px; }
.item.hover { width: auto; height: 46px; margin: 4px 2px 0; background: #c8c8c8; padding-left: 45px; min-width: 389px; }
.item.hover mark { background: none; border: 2px solid #f00; width: 109px; height: 41px; text-align: left; padding-left: 18px; color: #000; }
.item.checked { height: 48px; padding: 0 0 4px 19px; gap: 22px; }
.callout { position: absolute; left: 228px; top: -4px; width: 90px; height: 64px; border: 2px solid #f00; z-index: 3; }
.drill { margin: 28px 0 0 27px; }
.cross { margin: 27px 0 0 19px; }

.fields { overflow: hidden; }
.fields .search { border-color: #c8c6c4; margin: 35px -4px 7px 8px; padding-left: 22px; }
.field-list { border-top: 2px solid #e1dfdd; padding-top: 18px; }
.table-row { display: flex; align-items: center; height: 50px; padding-left: 8px; }
.table-row .icon { margin: 0 25px 0 14px; }
.table-row b { font-weight: 600; }
.icon { position: relative; }
.badge { position: absolute; left: 14px; top: 14px; }
.field-row { display: flex; align-items: center; height: 48px; padding: 0 0 0 24px; }
.table-row + .field-row { margin-top: 12px; }
.twist { width: 40px; }
.check { position: relative; margin-right: 7px; height: 24px; }
.check input { appearance: none; display: block; width: 24px; height: 24px; margin: 0; border: 2px solid #797775; border-radius: 4px; }
.check svg { position: absolute; left: 0; top: 0; }
.on .check input { background: #f2c811; border-color: #f2c811; }
.field-row .icon { margin-right: 17px; }
.field-row .badge { left: 13px; top: 14px; }
.on { font-weight: 600; }
</style>
